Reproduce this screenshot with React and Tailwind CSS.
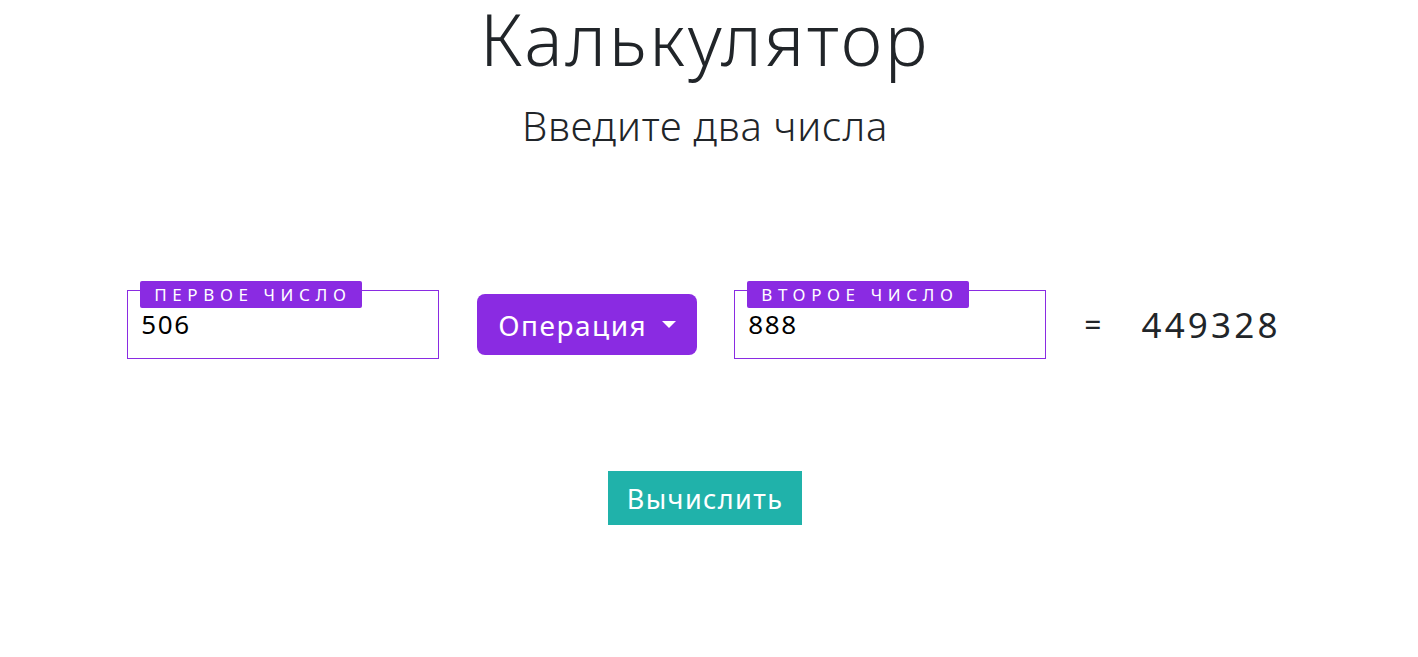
import React, { useState } from "react";

function NumberField({ label, value, onChange }) {
  return (
    <div className="relative w-[312px] h-[69px] border border-[#8a2be2] bg-white">
      <span className="absolute left-[12px] top-[-10px] w-[222px] h-[27px] flex items-center pl-[14px] rounded-[2px] bg-[#8a2be2] text-white text-[17px] leading-none tracking-[5.6px] uppercase">
        {label}
      </span>
      <input
        type="text"
        value={value}
        onChange={(e) => onChange(e.target.value)}
        className="block w-full h-[36px] mt-[15px] pl-[13px] bg-transparent outline-none text-[26px] leading-none tracking-[1.6px] text-black"
      />
    </div>
  );
}

export default function App() {
  const [a, setA] = useState("506");
  const [b, setB] = useState("888");
  const [result, setResult] = useState("449328");

  const calc = () => {
    const r = Number(a) * Number(b);
    setResult(isNaN(r) ? "—" : String(r));
  };

  return (
    <div className="min-h-screen bg-white pr-[8px] font-['Noto_Sans','DejaVu_Sans',sans-serif] text-[#212529]">
      <h1 className="pt-[2px] text-center text-[72px] font-light leading-none tracking-[2.6px]">Калькулятор</h1>
      <h2 className="mt-[32px] text-center text-[40px] font-light leading-none tracking-[0.8px]">Введите два числа</h2>

      {/* строка с полями */}
      <div className="mt-[144px] pr-[2px] flex items-center justify-center">
        <NumberField label="Первое число" value={a} onChange={setA} />
        <button className="ml-[38px] w-[220px] h-[61px] flex items-center justify-center gap-[15px] rounded-[8px] bg-[#8a2be2] text-white text-[28px] leading-none">
          <span className="tracking-[1.5px]">Операция</span>
          <span className="w-0 h-0 border-l-[7px] border-r-[7px] border-t-[7px] border-l-transparent border-r-transparent border-t-white" />
        </button>
        <div className="ml-[37px]">
          <NumberField label="Второе число" value={b} onChange={setB} />
        </div>
        <span className="ml-[38px] text-[30px] leading-none">=</span>
        <span className="ml-[40px] text-[35px] leading-none tracking-[3.2px]">{result}</span>
      </div>

      <div className="mt-[112px] flex justify-center">
        <button
          onClick={calc}
          className="w-[194px] h-[54px] bg-[#20b2aa] text-white text-[27px] leading-none tracking-[1.4px]"
        >
          Вычислить
        </button>
      </div>
    </div>
  );
}
